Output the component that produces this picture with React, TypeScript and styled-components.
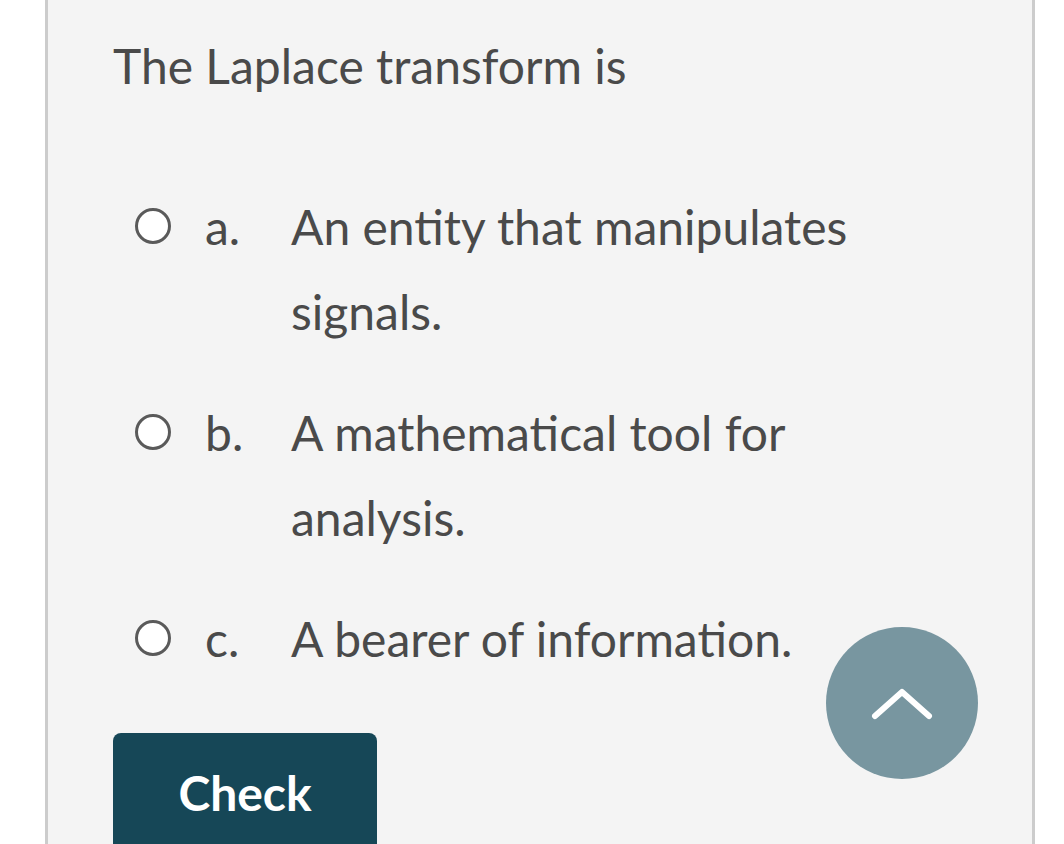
import styled, { createGlobalStyle } from "styled-components";

const GlobalStyle = createGlobalStyle`
  html, body {
    margin: 0;
    padding: 0;
    background: #ffffff;
    font-family: Lato, "Open Sans", sans-serif;
  }
`;

const Page = styled.div`
  height: 844px;
  overflow: hidden;
  position: relative;
`;

const Panel = styled.div`
  margin-left: 45px;
  width: 990px;
  height: 844px;
  background: #f4f4f4;
  border-left: 3px solid #cccccc;
  border-right: 3px solid #cccccc;
  padding: 34px 0 0 65px;
  box-sizing: border-box;
  color: #4a4a4a;
`;

const Question = styled.div`
  font-size: 48px;
  line-height: 64px;
  margin-bottom: 86px;
`;

const Options = styled.div`
  display: flex;
  flex-direction: column;
  gap: 36px;
`;

const Option = styled.label`
  display: grid;
  grid-template-columns: 70px 108px 600px;
  align-items: start;
  font-size: 48px;
  line-height: 85px;
`;

const Radio = styled.span`
  display: block;
  width: 30px;
  height: 30px;
  border: 3px solid #5a5a5a;
  border-radius: 50%;
  background: #ffffff;
  margin: 24px 0 0 22px;
`;

const Letter = styled.span`
  padding-left: 22px;
`;

const Answer = styled.span``;

const CheckButton = styled.button`
  margin-top: 52px;
  width: 264px;
  height: 130px;
  border: none;
  border-radius: 8px;
  background: #164757;
  color: #ffffff;
  font-family: Lato, "Open Sans", sans-serif;
  font-weight: 700;
  font-size: 48px;
  padding: 0 0 12px;
`;

const UpButton = styled.button`
  position: absolute;
  left: 826px;
  top: 627px;
  width: 152px;
  height: 152px;
  border-radius: 50%;
  border: none;
  background: #7896a0;
  display: flex;
  align-items: center;
  justify-content: center;
  padding: 0;
`;

const options = [
  { letter: "a.", text: "An entity that manipulates signals." },
  { letter: "b.", text: "A mathematical tool for analysis." },
  { letter: "c.", text: "A bearer of information." },
];

export default function App() {
  return (
    <Page>
      <GlobalStyle />
      <Panel>
        <Question>The Laplace transform is</Question>
        <Options>
          {options.map((o) => (
            <Option key={o.letter}>
              <Radio />
              <Letter>{o.letter}</Letter>
              <Answer>{o.text}</Answer>
            </Option>
          ))}
        </Options>
        <CheckButton>Check</CheckButton>
      </Panel>
      <UpButton aria-label="Back to top">
        <svg width="62" height="38" viewBox="0 0 62 38">
          <path
            d="M4 32 L31 8 L58 32"
            fill="none"
            stroke="#ffffff"
            strokeWidth="6"
            strokeLinecap="round"
            strokeLinejoin="round"
          />
        </svg>
      </UpButton>
    </Page>
  );
}
